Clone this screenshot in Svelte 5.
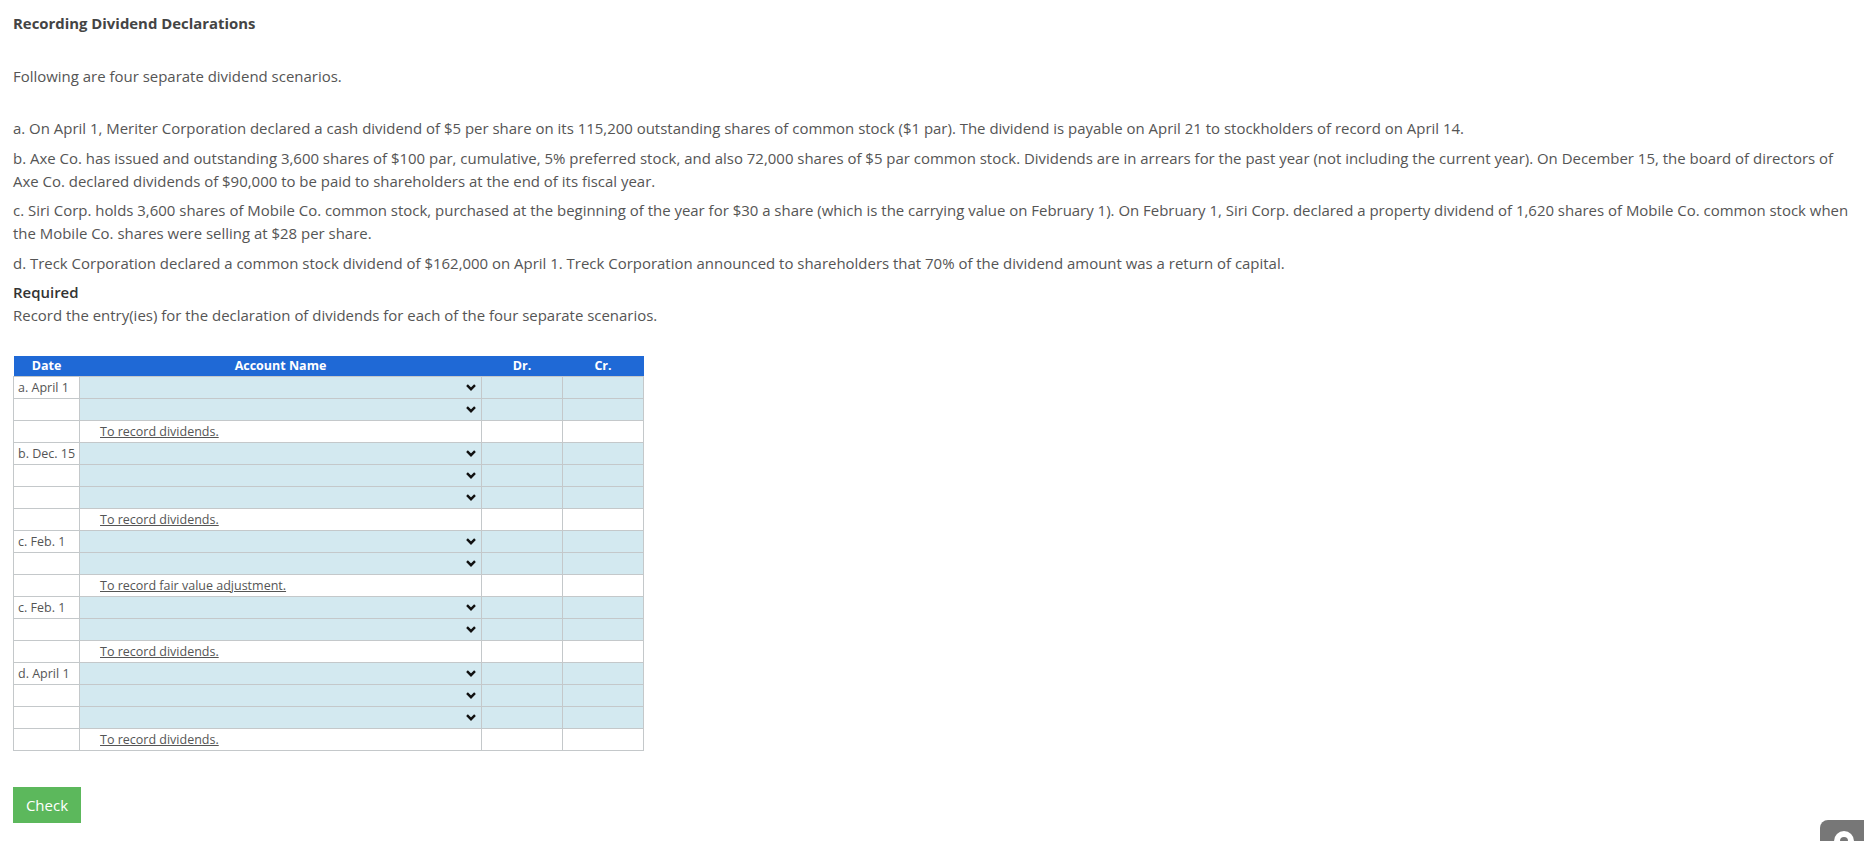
<script>
	const rows = [
		{ date: 'a. April 1', kind: 'select' },
		{ date: '', kind: 'select' },
		{ date: '', kind: 'note', text: 'To record dividends.' },
		{ date: 'b. Dec. 15', kind: 'select' },
		{ date: '', kind: 'select' },
		{ date: '', kind: 'select' },
		{ date: '', kind: 'note', text: 'To record dividends.' },
		{ date: 'c. Feb. 1', kind: 'select' },
		{ date: '', kind: 'select' },
		{ date: '', kind: 'note', text: 'To record fair value adjustment.' },
		{ date: 'c. Feb. 1', kind: 'select' },
		{ date: '', kind: 'select' },
		{ date: '', kind: 'note', text: 'To record dividends.' },
		{ date: 'd. April 1', kind: 'select' },
		{ date: '', kind: 'select' },
		{ date: '', kind: 'select' },
		{ date: '', kind: 'note', text: 'To record dividends.' }
	];
</script>

<main class="page">
	<h1>Recording Dividend Declarations</h1>
	<p class="intro">Following are four separate dividend scenarios.</p>

	<p>a. On April 1, Meriter Corporation declared a cash dividend of $5 per share on its 115,200 outstanding shares of common stock ($1 par). The dividend is payable on April 21 to stockholders of record on April 14.</p>
	<p>b. Axe Co. has issued and outstanding 3,600 shares of $100 par, cumulative, 5% preferred stock, and also 72,000 shares of $5 par common stock. Dividends are in arrears for the past year (not including the current year). On December 15, the board of directors of Axe Co. declared dividends of $90,000 to be paid to shareholders at the end of its fiscal year.</p>
	<p>c. Siri Corp. holds 3,600 shares of Mobile Co. common stock, purchased at the beginning of the year for $30 a share (which is the carrying value on February 1). On February 1, Siri Corp. declared a property dividend of 1,620 shares of Mobile Co. common stock when the Mobile Co. shares were selling at $28 per share.</p>
	<p>d. Treck Corporation declared a common stock dividend of $162,000 on April 1. Treck Corporation announced to shareholders that 70% of the dividend amount was a return of capital.</p>
	<p><strong>Required</strong><br />Record the entry(ies) for the declaration of dividends for each of the four separate scenarios.</p>

	<table>
		<colgroup>
			<col class="c-date" />
			<col class="c-name" />
			<col class="c-amt" />
			<col class="c-amt" />
		</colgroup>
		<thead>
			<tr>
				<th>Date</th>
				<th>Account Name</th>
				<th>Dr.</th>
				<th>Cr.</th>
			</tr>
		</thead>
		<tbody>
			{#each rows as row}
				<tr>
					<td class="date">{row.date}</td>
					{#if row.kind === 'select'}
						<td class="input">
							<div class="select">
								<svg width="10" height="7" viewBox="0 0 10 7" aria-hidden="true">
									<path d="M1 1.2 L5 5.2 L9 1.2" fill="none" stroke="#111" stroke-width="2.4" />
								</svg>
							</div>
						</td>
						<td class="input"></td>
						<td class="input"></td>
					{:else}
						<td class="note"><span>{row.text}</span></td>
						<td></td>
						<td></td>
					{/if}
				</tr>
			{/each}
		</tbody>
	</table>

	<button class="check">Check</button>

	<div class="help">
		<svg width="44" height="21" viewBox="0 0 44 21" aria-hidden="true">
			<circle cx="24" cy="21" r="10" fill="#fff" />
			<circle cx="24" cy="21" r="4" fill="#777" />
		</svg>
	</div>
</main>

<style>
	:global(body) {
		margin: 0;
		background: #fff;
	}

	.page {
		height: 841px;
		box-sizing: border-box;
		padding: 13px 3px 0 13px;
		font-family: "Open Sans", sans-serif;
		font-size: 14.96px;
		line-height: 22.4px;
		color: #555;
		overflow: hidden;
		position: relative;
	}

	h1 {
		margin: 0;
		font-size: 14.9px;
		line-height: 20px;
		font-weight: 700;
		color: #444;
	}

	p {
		margin: 0 0 7.4px;
	}

	.intro {
		margin: 32px 0 30px;
	}

	strong {
		font-weight: 600;
		color: #333;
	}

	table {
		margin-top: 30px;
		width: 630px;
		table-layout: fixed;
		border-collapse: collapse;
		font-size: 12.5px;
	}

	.c-date {
		width: 66px;
	}

	.c-name {
		width: 402px;
	}

	.c-amt {
		width: 81px;
	}

	th {
		height: 20px;
		padding: 0;
		background: #1f69d6;
		color: #fff;
		font-weight: 700;
		line-height: 18px;
		text-align: center;
	}

	td {
		box-sizing: border-box;
		height: 22px;
		padding: 0;
		border: 1px solid #c4c8ca;
		line-height: 18px;
		overflow: hidden;
	}

	.date {
		padding-left: 4px;
		white-space: nowrap;
	}

	.input {
		background: #d3e9f0;
	}

	.select {
		display: flex;
		justify-content: flex-end;
		align-items: center;
		height: 20px;
		padding-right: 5px;
	}

	.note {
		padding-left: 20px;
		color: #555;
	}

	.note span {
		text-decoration: underline;
	}

	.check {
		display: block;
		margin-top: 36px;
		width: 68px;
		height: 36px;
		padding: 0;
		border: 0;
		background: #5cb85c;
		color: #fff;
		font-family: inherit;
		font-size: 15px;
	}

	.help {
		position: absolute;
		right: 0;
		bottom: 0;
		width: 44px;
		height: 21px;
		background: #777;
		border-radius: 8px 0 0 0;
	}

	.help svg {
		display: block;
	}
</style>
